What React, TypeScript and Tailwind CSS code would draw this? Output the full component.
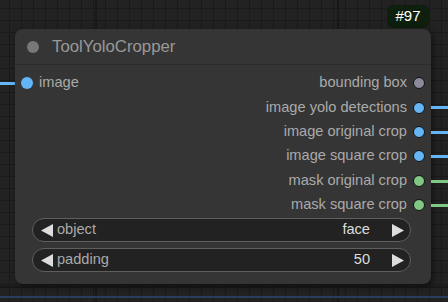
import React from 'react';

const outputs = [
  { label: 'bounding box', color: 'bg-[#8c8a9a]', wire: '' },
  { label: 'image yolo detections', color: 'bg-[#64b5f6]', wire: 'bg-[#64b5f6]' },
  { label: 'image original crop', color: 'bg-[#64b5f6]', wire: 'bg-[#64b5f6]' },
  { label: 'image square crop', color: 'bg-[#64b5f6]', wire: 'bg-[#64b5f6]' },
  { label: 'mask original crop', color: 'bg-[#81c784]', wire: 'bg-[#81c784]' },
  { label: 'mask square crop', color: 'bg-[#81c784]', wire: 'bg-[#81c784]' },
];

function Arrow({ left }: { left?: boolean }) {
  return (
    <svg width="12" height="13" viewBox="0 0 12 13" className="shrink-0">
      <polygon points={left ? '12,0 12,13 0,6.5' : '0,0 0,13 12,6.5'} fill="#ddd" />
    </svg>
  );
}

function Widget({ name, value }: { name: string; value: string }) {
  return (
    <div className="flex items-center h-[24px] rounded-full border border-[#5f5f5f] bg-[#222] pl-[8px] pr-[6px] text-[14.6px]">
      <Arrow left />
      <span className="ml-[4px] text-[#aaa]">{name}</span>
      <span className="ml-auto text-[#ddd]">{value}</span>
      <span className="ml-[22px]">
        <Arrow />
      </span>
    </div>
  );
}

export default function App() {
  return (
    <div
      className="relative w-[448px] h-[302px] overflow-hidden bg-[#222] font-['Liberation_Sans',Arial,sans-serif] bg-[linear-gradient(to_right,#1a1a1a_1px,transparent_1px),linear-gradient(to_bottom,#1a1a1a_1px,transparent_1px)] bg-[size:12px_12px] bg-[position:9px_8px]"
    >
      {/* major grid lines */}
      <div className="absolute left-[95px] top-0 h-full w-[2px] bg-[#181818]" />
      <div className="absolute left-[337px] top-0 h-full w-[2px] bg-[#181818]" />
      <div className="absolute left-0 top-[286px] w-full h-[2px] bg-[#181818]" />
      {/* wire at bottom */}
      <div className="absolute left-0 top-[296px] w-full h-[2px] bg-[#2a3d5e]" />
      {/* input wire */}
      <div className="absolute left-0 top-[82px] w-[22px] h-[3px] bg-[#64b5f6]" />

      {/* badge */}
      <div className="absolute left-[387px] top-[5px] w-[42px] h-[23px] rounded-[6px] bg-[#0e1f0e] flex items-center justify-center text-white text-[15px]">
        #97
      </div>

      {/* node */}
      <div className="absolute left-[15px] top-[29px] w-[416px] h-[255px] rounded-[8px] bg-[#353535] shadow-[2px_2px_6px_rgba(0,0,0,0.5)]">
        <div className="flex items-center h-[36px] border-b border-[#2b2b2b] pl-[12px]">
          <div className="w-[12px] h-[12px] rounded-full bg-[#777]" />
          <span className="ml-[13px] text-[16.8px] text-[#999]">ToolYoloCropper</span>
        </div>
        <div className="relative flex pt-[6px]">
          <div className="flex items-start">
            <div className="flex items-center h-[24px] pl-[6px]">
              <div className="w-[12px] h-[12px] rounded-full bg-[#64b5f6]" />
              <span className="ml-[6px] text-[14.6px] text-[#aaa]">image</span>
            </div>
          </div>
          <div className="ml-auto flex flex-col">
            {outputs.map((o) => (
              <div key={o.label} className="relative flex items-center justify-end h-[24.4px] pr-[6px]">
                <span className="text-[14.6px] text-[#aaa] mr-[6px]">{o.label}</span>
                <div className={`w-[12px] h-[12px] rounded-full border border-[#111] ${o.color}`} />
                {o.wire && <div className={`absolute left-[100%] top-[11px] w-[24px] h-[3px] ${o.wire}`} />}
              </div>
            ))}
          </div>
        </div>
        <div className="flex flex-col gap-[6px] pt-[1px] pl-[17px] pr-[20px]">
          <Widget name="object" value="face" />
          <Widget name="padding" value="50" />
        </div>
      </div>
    </div>
  );
}
